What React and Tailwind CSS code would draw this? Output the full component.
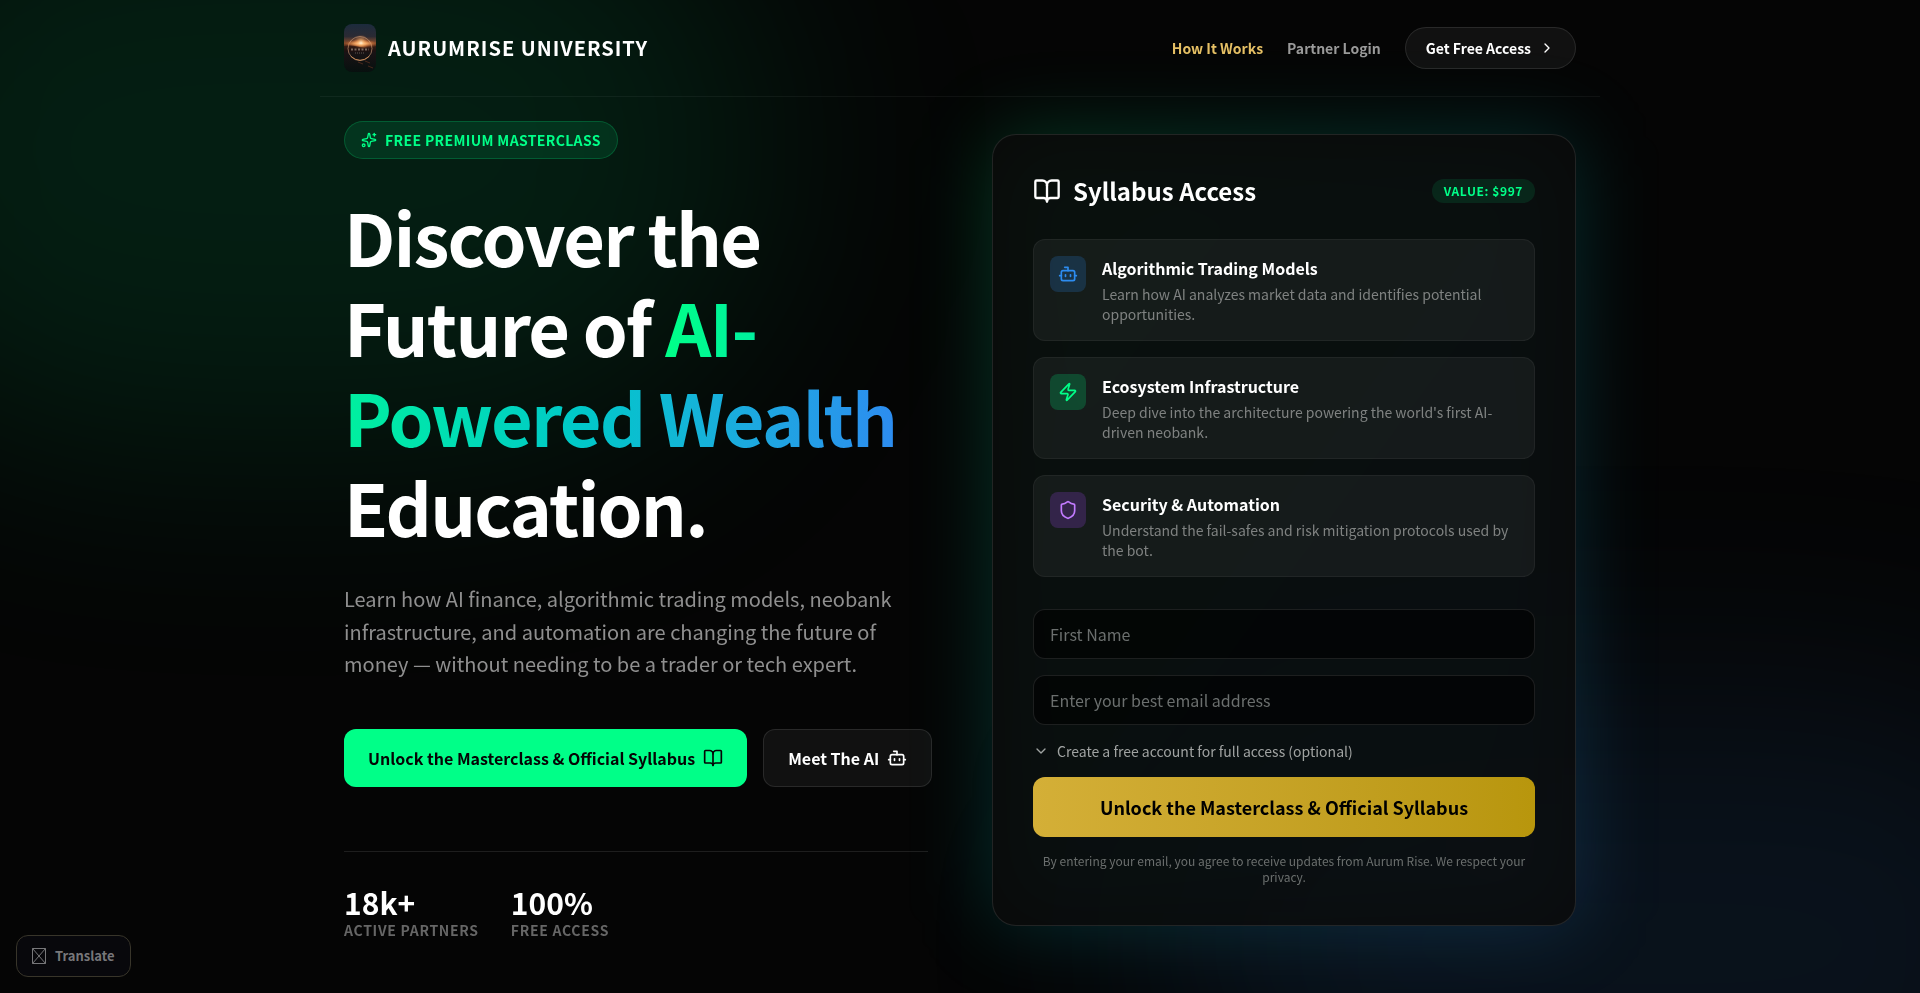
import { useState } from 'react';
import { BookOpen, Bot, ChevronDown, ChevronRight, Shield, Sparkles, Zap } from 'lucide-react';

const MODULES = [
  {
    title: 'Algorithmic Trading Models',
    text: 'Learn how AI analyzes market data and identifies potential opportunities.',
    icon: Bot,
    tone: 'bg-[#2d8cf0]/20 text-[#2d8cf0]',
  },
  {
    title: 'Ecosystem Infrastructure',
    text: "Deep dive into the architecture powering the world's first AI-driven neobank.",
    icon: Zap,
    tone: 'bg-[#00ff88]/20 text-[#00ff88]',
  },
  {
    title: 'Security & Automation',
    text: 'Understand the fail-safes and risk mitigation protocols used by the bot.',
    icon: Shield,
    tone: 'bg-purple-500/20 text-purple-400',
  },
];

const STATS = [
  { value: '18k+', label: 'Active Partners' },
  { value: '100%', label: 'Free Access' },
];

const Logo = () => (
  <svg viewBox="0 0 32 48" className="w-8 h-12 rounded-lg" aria-hidden="true">
    <defs>
      <linearGradient id="sky" x1="0" y1="0" x2="0" y2="1">
        <stop offset="0" stopColor="#1c2b3d" />
        <stop offset="0.26" stopColor="#2b2a33" />
        <stop offset="0.4" stopColor="#8a4c2a" />
        <stop offset="0.47" stopColor="#4d2818" />
        <stop offset="0.56" stopColor="#1a1315" />
        <stop offset="1" stopColor="#07100f" />
      </linearGradient>
      <radialGradient id="sun">
        <stop offset="0" stopColor="#fff6df" />
        <stop offset="0.35" stopColor="#ffb871" stopOpacity="0.9" />
        <stop offset="1" stopColor="#d9692c" stopOpacity="0" />
      </radialGradient>
    </defs>
    <rect width="32" height="48" fill="url(#sky)" />
    <ellipse cx="17" cy="19.500" rx="16" ry="4" fill="url(#sun)" />
    <ellipse cx="17" cy="18.500" rx="8" ry="8" fill="url(#sun)" opacity="0.7" />
    <path d="M0 22 Q8 20.500 16 23 T32 22 V28 H0Z" fill="#20110f" opacity="0.6" />
    <circle cx="16" cy="24.500" r="12" fill="none" stroke="#d9a37a" strokeWidth="0.800" opacity="0.75" />
    <path d="M7 32.500 Q16 40 25 32.500" fill="none" stroke="#f0a060" strokeWidth="0.800" opacity="0.8" />
    <path d="M7 25.500h18" stroke="#c9b8a8" strokeWidth="2" strokeDasharray="2 1.500" opacity="0.5" />
    <path d="M11 29h10" stroke="#c9b8a8" strokeWidth="1" strokeDasharray="1 1" opacity="0.4" />
    <path d="M14 38l5 2M21 37l5 2M24 42l5 2" stroke="#a04b2f" strokeWidth="0.800" opacity="0.5" />
  </svg>
);

const Backdrop = () => (
  <div className="fixed inset-0 overflow-hidden pointer-events-none" aria-hidden="true">
    <div className="absolute -top-[15%] -left-[10%] w-1/2 h-[60%] rounded-full bg-[#00ff88]/10 blur-[120px]" />
    <div className="absolute -bottom-[20%] -right-[10%] w-1/2 h-1/2 rounded-full bg-[#2d8cf0]/10 blur-[120px]" />
  </div>
);

const Header = () => (
  <header className="max-w-7xl mx-auto px-6 py-6 flex items-center justify-between border-b border-white/5">
    <div className="flex items-center gap-3">
      <Logo />
      <span className="text-xl font-bold tracking-wider uppercase">AurumRise University</span>
    </div>
    <nav className="flex items-center gap-6 text-sm font-bold">
      <a href="#how" className="text-[#e6c065]">How It Works</a>
      <a href="#login" className="text-[#9a9a9a]">Partner Login</a>
      <a
        href="#access"
        className="h-[42px] px-5 flex items-center gap-2 rounded-full border border-white/10 bg-white/5"
      >
        Get Free Access <ChevronRight size={16} />
      </a>
    </nav>
  </header>
);

const Hero = () => (
  <section>
    <div className="w-fit flex items-center gap-2 h-[38px] px-4 rounded-full border border-[#00ff88]/20 bg-[#00ff88]/10 text-[#00ff88] text-sm font-bold tracking-wide uppercase">
      <Sparkles size={16} /> Free Premium Masterclass
    </div>
    <h1 className="mt-8 text-7xl leading-[90px] font-bold tracking-tight">
      Discover the Future of{' '}
      <span className="bg-linear-to-r from-[#00ff88] to-[#2d8cf0] bg-clip-text text-transparent">
        AI-Powered Wealth
      </span>{' '}
      Education.
    </h1>
    <p className="mt-8 text-xl leading-relaxed text-[#8f8f8f]">
      Learn how AI finance, algorithmic trading models, neobank infrastructure, and automation are
      changing the future of money — without needing to be a trader or tech expert.
    </p>
    <div className="mt-12 flex gap-4">
      <button className="h-[58px] px-6 flex items-center gap-2 rounded-xl bg-[#00ff88] text-[#050505] font-bold whitespace-nowrap">
        Unlock the Masterclass &amp; Official Syllabus <BookOpen size={20} />
      </button>
      <button className="h-[58px] px-6 flex items-center gap-2 rounded-xl border border-white/10 bg-[#111111] font-bold whitespace-nowrap">
        Meet The AI <Bot size={20} />
      </button>
    </div>
    <dl className="mt-16 pt-8 flex gap-8 border-t border-white/10">
      {STATS.map((stat) => (
        <div key={stat.label} className="flex flex-col-reverse">
          <dt className="text-sm font-bold tracking-wider uppercase text-[#666666]">
            {stat.label}
          </dt>
          <dd className="text-3xl font-bold">{stat.value}</dd>
        </div>
      ))}
    </dl>
  </section>
);

const SyllabusCard = () => {
  const [form, setForm] = useState({ name: '', email: '' });
  const [showAccount, setShowAccount] = useState(false);

  const handleChange = (e) => setForm({ ...form, [e.target.name]: e.target.value });

  return (
    <section className="relative">
      <div className="absolute inset-0 rounded-3xl bg-linear-to-br from-[#00ff88]/20 to-[#2d8cf0]/20 blur-2xl" />
      <div className="relative p-10 rounded-3xl border border-white/10 bg-[#0a0a0a]/85">
        <div className="flex items-center justify-between">
          <h2 className="flex items-center gap-3 text-2xl font-bold">
            <BookOpen size={28} /> Syllabus Access
          </h2>
          <span className="h-6 px-3 flex items-center rounded-full bg-[#00ff88]/10 text-[#00ff88] text-xs font-bold tracking-wider">
            VALUE: $997
          </span>
        </div>

        <ul className="mt-8 space-y-4">
          {MODULES.map(({ title, text, icon: Icon, tone }) => (
            <li key={title} className="p-4 flex items-start gap-4 rounded-xl border border-white/5 bg-white/5">
              <span className={`size-9 shrink-0 flex items-center justify-center rounded-lg ${tone}`}>
                <Icon size={20} />
              </span>
              <div>
                <h3 className="font-bold">{title}</h3>
                <p className="mt-1 text-sm text-[#7f8281]">{text}</p>
              </div>
            </li>
          ))}
        </ul>

        <form className="mt-8" onSubmit={(e) => e.preventDefault()}>
          <input
            name="name"
            aria-label="First Name"
            placeholder="First Name"
            value={form.name}
            onChange={handleChange}
            className="w-full h-[50px] px-4 rounded-xl border border-white/10 bg-black/60 placeholder:text-[#6b6f6e]"
          />
          <input
            type="email"
            name="email"
            aria-label="Email address"
            placeholder="Enter your best email address"
            value={form.email}
            onChange={handleChange}
            className="mt-4 w-full h-[50px] px-4 rounded-xl border border-white/10 bg-black/60 placeholder:text-[#6b6f6e]"
          />
          <button
            type="button"
            aria-expanded={showAccount}
            onClick={() => setShowAccount(!showAccount)}
            className="mt-4 flex items-center gap-2 text-sm text-[#a0a3a2]"
          >
            <ChevronDown size={16} /> Create a free account for full access (optional)
          </button>
          <button
            type="submit"
            className="mt-4 w-full h-[60px] rounded-xl bg-linear-to-r from-[#d4af37] to-[#b8960c] text-black text-lg font-bold"
          >
            Unlock the Masterclass &amp; Official Syllabus
          </button>
        </form>
        <p className="mt-4 text-center text-xs text-[#6b6f6e]">
          By entering your email, you agree to receive updates from Aurum Rise. We respect your privacy.
        </p>
      </div>
    </section>
  );
};

const TranslateButton = () => (
  <button className="fixed left-4 bottom-4 h-[42px] px-[15px] flex items-center gap-2 rounded-xl border border-[#38352a] bg-[#08080c] text-[#77777a] text-[13px] font-bold">
    <svg width="15" height="16" viewBox="0 0 15 16" fill="none" stroke="currentColor" aria-hidden="true">
      <path d="M.5.5h13v15H.5zM.5.5l13 15M13.500.5l-13 15" />
    </svg>
    Translate
  </button>
);

const App = () => (
  <div className="min-h-screen bg-[#050505] text-white font-['Noto_Sans_CJK_JP','Noto_Sans',sans-serif]">
    <Backdrop />
    <div className="relative">
      <Header />
      <main className="max-w-7xl mx-auto px-6 py-6 grid grid-cols-2 gap-16 items-center">
        <Hero />
        <SyllabusCard />
      </main>
    </div>
    <TranslateButton />
  </div>
);

export default App;
